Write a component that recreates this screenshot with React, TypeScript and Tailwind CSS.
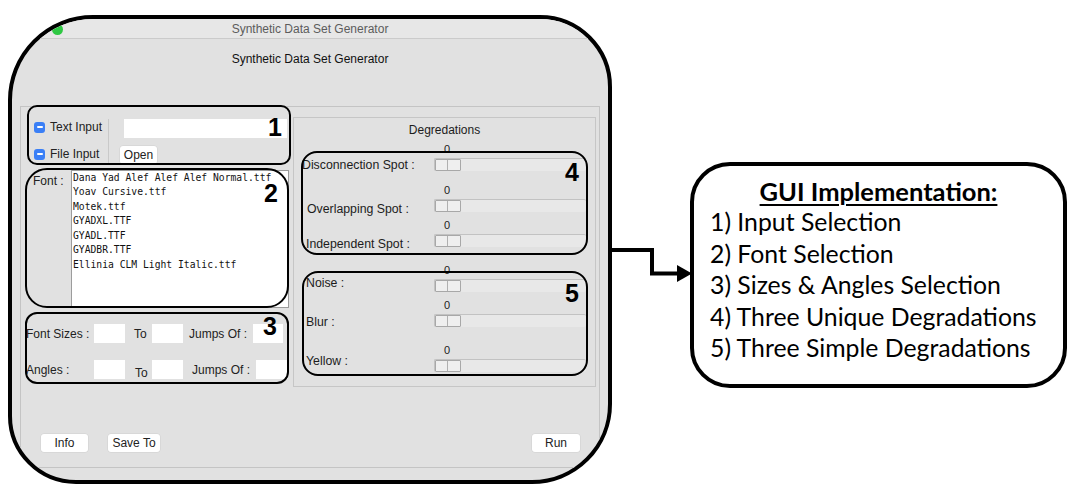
import React from 'react';

const sans = { fontFamily: '"Liberation Sans", Arial, sans-serif' };

const fonts = [
  'Dana Yad Alef Alef Alef Normal.ttf',
  'Yoav Cursive.ttf',
  'Motek.ttf',
  'GYADXL.TTF',
  'GYADL.TTF',
  'GYADBR.TTF',
  'Ellinia CLM Light Italic.ttf',
];

const Check = () => (
  <span className="w-[11px] h-[11px] rounded-[3px] bg-[#3a7ff6] flex items-center justify-center shrink-0">
    <span className="w-[6px] h-[2px] bg-white rounded-[1px]" />
  </span>
);

const Field = ({ w }: { w: string }) => <div className={`${w} h-[19px] bg-white`} />;

const Btn = ({ label, w }: { label: string; w: string }) => (
  <div
    className={`${w} h-[18px] bg-white rounded-[3px] shadow-[0_0_0_0.5px_#d0d0d0] flex items-center justify-center text-[12px] text-[#222]`}
  >
    {label}
  </div>
);

type SliderProps = { label: string; pl: string; mt: string; lt: string };

const Slider = ({ label, pl, mt, lt }: SliderProps) => (
  <div className={mt}>
    <div className="pl-[140px] h-[12px]">
      <div className="w-[26px] text-center text-[11px] leading-[12px] text-[#222]">0</div>
    </div>
    <div className="flex items-start mt-[3px] h-[13px]">
      <span className={`w-[140px] ${pl} ${lt} text-[12.3px] leading-[14px] text-[#1c1c1c] whitespace-nowrap`}>
        {label}
      </span>
      <div className="w-[152px] h-[13px] bg-[#e8e8e8] border-t border-l border-[#c2c2c2] rounded-[2px] flex">
        <div className="w-[26px] h-[12px] flex border border-[#a8a8a8] bg-[#efefef] rounded-[1px]">
          <div className="w-1/2 border-r border-[#b0b0b0]" />
          <div className="w-1/2" />
        </div>
      </div>
    </div>
  </div>
);

const Box = ({ cls, n, ncls }: { cls: string; n: string; ncls: string }) => (
  <div className={`absolute border-2 border-black ${cls}`}>
    <span
      className={`absolute ${ncls} text-[25px] leading-[25px] font-bold text-black`}
      style={sans}
    >
      {n}
    </span>
  </div>
);

export default function App() {
  return (
    <div className="relative flex items-start w-[1080px] h-[500px] bg-white overflow-hidden" style={sans}>
      {/* window */}
      <div className="ml-[8px] mt-[15px] w-[604px] h-[469px] shrink-0 border-4 border-black rounded-tl-[85px] rounded-tr-[72px] rounded-bl-[68px] rounded-br-[80px] bg-[#e1e1e1] overflow-hidden flex flex-col">
        <div className="relative h-[20px] shrink-0 bg-[#e7e7e7] border-b border-[#cbcbcb] flex items-center justify-center">
          <span className="absolute left-[40px] top-[5px] w-[11px] h-[11px] rounded-full bg-[#2fc843]" />
          <span className="text-[12px] text-[#5c5c5c]">Synthetic Data Set Generator</span>
        </div>
        <div className="mt-[13px] h-[14px] text-center text-[12px] leading-[14px] text-[#111]">
          Synthetic Data Set Generator
        </div>

        {/* main panel */}
        <div className="ml-[8px] mt-[40px] w-[580px] h-[362px] border border-[#c4c4c4] flex flex-col">
          <div className="flex">
            {/* left column */}
            <div className="w-[272px] flex flex-col">
              <div className="flex mt-[12px] h-[46px]">
                <div className="w-[88px] border-r border-[#c9c9c9] pl-[13px] flex flex-col gap-[11px]">
                  <div className="flex items-center gap-[5px] h-[16px]">
                    <Check />
                    <span className="text-[12px] text-[#222]">Text Input</span>
                  </div>
                  <div className="flex items-center gap-[5px] h-[16px]">
                    <Check />
                    <span className="text-[12px] text-[#222]">File Input</span>
                  </div>
                </div>
                <div className="flex flex-col">
                  <div className="ml-[15px] w-[163px] h-[19px] bg-white" />
                  <div className="ml-[11px] mt-[8px]">
                    <Btn label="Open" w="w-[37px]" />
                  </div>
                </div>
              </div>

              <div className="flex mt-[5px] h-[138px]">
                <div className="w-[50px] pl-[12px] pt-[4px] text-[12px] leading-[14px] text-[#222]">Font :</div>
                <div
                  className="w-[218px] h-full bg-white border border-[#9c9c9c] pl-[1px] text-[9.7px] leading-[14.45px] text-[#111]"
                  style={{ fontFamily: '"DejaVu Sans Mono", monospace' }}
                >
                  {fonts.map((f) => (
                    <div key={f} className="whitespace-nowrap">
                      {f}
                    </div>
                  ))}
                </div>
              </div>

              <div className="flex items-center mt-[16px] h-[19px] text-[12px] text-[#222]">
                <span className="w-[73px] pl-[5px]">Font Sizes :</span>
                <Field w="w-[31px]" />
                <span className="w-[27px] pl-[9px]">To</span>
                <Field w="w-[31px]" />
                <span className="w-[70px] pl-[6px]">Jumps Of :</span>
                <Field w="w-[30px]" />
              </div>
              <div className="flex items-center mt-[17px] h-[19px] text-[12px] text-[#222]">
                <span className="w-[73px] pl-[5px]">Angles :</span>
                <Field w="w-[31px]" />
                <span className="w-[27px] pl-[10px] pt-[6px]">To</span>
                <Field w="w-[31px]" />
                <span className="w-[73px] pl-[9px]">Jumps Of :</span>
                <Field w="w-[32px]" />
              </div>
            </div>

            {/* degradations */}
            <div className="mt-[10px] w-[303px] h-[270px] border border-[#c6c6c6] flex flex-col">
              <div className="mt-[5px] h-[14px] text-center text-[12px] leading-[14px] text-[#1c1c1c]">Degredations</div>
              <Slider label="Disconnection Spot :" pl="pl-[8px]" mt="mt-[6px]" lt="mt-0" />
              <Slider label="Overlapping Spot :" pl="pl-[13px]" mt="mt-[13px]" lt="mt-[3px]" />
              <Slider label="Independent Spot :" pl="pl-[12px]" mt="mt-[7px]" lt="mt-[3px]" />
              <Slider label="Noise :" pl="pl-[12px]" mt="mt-[17px]" lt="-mt-[3px]" />
              <Slider label="Blur :" pl="pl-[12px]" mt="mt-[7px]" lt="mt-[1px]" />
              <Slider label="Yellow :" pl="pl-[12px]" mt="mt-[17px]" lt="-mt-[5px]" />
            </div>
          </div>

          <div className="mt-auto flex items-center pl-[20px] pr-[19px] pb-[15px]">
            <Btn label="Info" w="w-[47px]" />
            <div className="ml-[20px]">
              <Btn label="Save To" w="w-[52px]" />
            </div>
            <div className="ml-auto">
              <Btn label="Run" w="w-[48px]" />
            </div>
          </div>
        </div>
      </div>

      {/* connector arrow */}
      <svg className="mt-[244px] w-[78px] h-[42px] shrink-0 overflow-visible" viewBox="0 0 78 42">
        <path d="M-2 6 H40 V29.5 H68" fill="none" stroke="black" strokeWidth="4" />
        <polygon points="65,21 80,29.5 65,38" fill="black" />
      </svg>

      {/* summary box */}
      <div
        className="mt-[162px] w-[377px] h-[226px] shrink-0 border-4 border-black rounded-[40px] bg-white pt-[10px] text-black"
        style={{ fontFamily: 'Lato, "Open Sans", sans-serif' }}
      >
        <div className="text-center text-[25.5px] leading-[30px] font-bold underline underline-offset-[3px] decoration-2">
          GUI Implementation:
        </div>
        <div className="pl-[16px] text-[24.8px] leading-[31.5px]">
          <div>1) Input Selection</div>
          <div>2) Font Selection</div>
          <div>3) Sizes &amp; Angles Selection</div>
          <div>4) Three Unique Degradations</div>
          <div>5) Three Simple Degradations</div>
        </div>
      </div>

      {/* annotation overlays */}
      <Box cls="left-[27px] top-[105px] w-[264px] h-[60px] rounded-[10px]" n="1" ncls="right-[7px] top-[8px]" />
      <Box cls="left-[25px] top-[168px] w-[264px] h-[140px] rounded-[22px]" n="2" ncls="right-[9px] top-[11px]" />
      <Box cls="left-[25px] top-[312px] w-[264px] h-[72px] rounded-[12px]" n="3" ncls="right-[10px] top-[0px]" />
      <Box cls="left-[301px] top-[151px] w-[287px] h-[104px] rounded-[16px]" n="4" ncls="right-[7px] top-[7px]" />
      <Box cls="left-[302px] top-[271px] w-[286px] h-[105px] rounded-[16px]" n="5" ncls="right-[7px] top-[8px]" />
    </div>
  );
}
